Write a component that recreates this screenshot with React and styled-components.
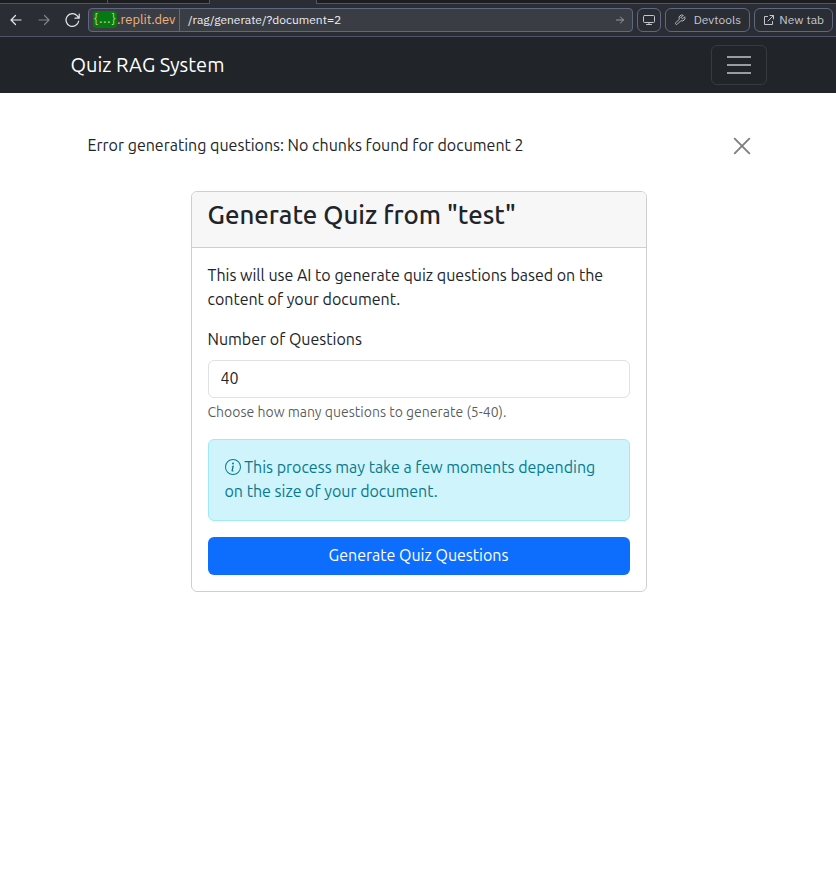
import React from "react";
import styled, { createGlobalStyle } from "styled-components";

const GlobalStyle = createGlobalStyle`
  *, *::before, *::after { box-sizing: border-box; }
  body {
    margin: 0;
    background: #fff;
    color: #212529;
    font: 400 16px/24px "Ubuntu", "Open Sans", sans-serif;
  }
  button, input { font: inherit; margin: 0; }
`;

const Page = styled.div`
  height: 870px;
  overflow: hidden;
`;

/* Browser chrome */
const TabStrip = styled.div`
  display: flex;
  height: 4px;
  background: #1b1d21;
`;
const TabEdge = styled.div`
  width: ${(p) => p.$width}px;
  border-right: ${(p) => (p.$last ? 0 : 1)}px solid #4e5569;
  border-bottom: ${(p) => (p.$active ? 0 : 1)}px solid #4e5569;
  background: ${(p) => (p.$active ? "#2b2d35" : "#1b1d21")};
  flex: ${(p) => (p.$last ? "1" : "none")};
`;
const Toolbar = styled.div`
  display: flex;
  align-items: center;
  height: 33px;
  padding: 0 3px 1px 2px;
  background: #2b2d35;
  border-bottom: 1px solid #4e5569;
  color: #c9ccd3;
  font: 400 12px/22px "IBM Plex Sans", "Inter", sans-serif;
`;
const NavIcon = styled.button`
  display: flex;
  align-items: center;
  justify-content: center;
  width: 28px;
  height: 24px;
  padding: 0;
  border: 0;
  background: none;
  color: ${(p) => (p.$muted ? "#81838a" : "#e6e7ea")};
`;
const AddressBar = styled.div`
  display: flex;
  width: 545px;
  height: 24px;
  margin: 0 4px 0 2px;
  border: 1px solid #5f6880;
  border-radius: 4px;
  background: #3b3d45;
`;
const Host = styled.div`
  display: flex;
  align-items: center;
  width: 91px;
  padding-left: 4px;
  border-right: 1px solid #5f6880;
  color: #f0b27a;
  font-size: 13px;
  line-height: 21px;
`;
const HostName = styled.span`
  height: 22px;
`;
const HostBadge = styled.span`
  width: 24px;
  height: 17px;
  border-radius: 4px;
  background: #067a12;
  color: #c9cf6b;
  letter-spacing: 0.5px;
  line-height: 16px;
  text-align: center;
`;
const Path = styled.div`
  flex: 1;
  padding-left: 8px;
  color: #eceef1;
`;
const GoIcon = styled.div`
  display: flex;
  align-items: center;
  padding-right: 7px;
  color: #9a9ca3;
`;
const ToolButton = styled.button`
  display: flex;
  align-items: center;
  justify-content: space-between;
  width: ${(p) => p.$width}px;
  height: 24px;
  margin-right: ${(p) => (p.$last ? 0 : 4)}px;
  padding: 0 ${(p) => (p.$wide ? 8 : 5)}px;
  border: 1px solid #5f6880;
  border-radius: 6px;
  background: none;
  color: #c3c6ce;
`;

/* Site header */
const Navbar = styled.nav`
  display: flex;
  align-items: center;
  justify-content: space-between;
  height: 56px;
  padding: 0 69px 0 70.5px;
  background: #212529;
`;
const Brand = styled.div`
  color: #fff;
  font-size: 20px;
  line-height: 30px;
`;
const Toggler = styled.button`
  display: flex;
  align-items: center;
  justify-content: center;
  width: 56px;
  height: 40px;
  padding: 0;
  border: 1px solid #373b3e;
  border-radius: 6px;
  background: none;
  color: rgba(255, 255, 255, 0.55);
`;

/* Page content */
const Message = styled.div`
  display: flex;
  align-items: center;
  justify-content: space-between;
  width: 695.5px;
  height: 58px;
  margin: 23px 0 17px 71.5px;
  padding: 0 16px;
`;
const CloseButton = styled.button`
  display: flex;
  padding: 0;
  margin-top: 2px;
  border: 0;
  background: none;
  color: #7f7f7f;
`;
const Card = styled.section`
  width: 456px;
  height: 401px;
  margin-left: 190.5px;
  border: 1px solid #cfcfd0;
  border-radius: 6px;
  overflow: hidden;
`;
const CardHeader = styled.header`
  height: 56px;
  padding: 7px 16px 8px;
  border-bottom: 1px solid #cfcfd0;
  background: #f7f7f7;
`;
const Title = styled.h3`
  margin: 0;
  font-size: 25.8px;
  font-weight: 500;
  line-height: 31px;
`;
const CardBody = styled.div`
  display: flex;
  flex-direction: column;
  padding: 15px 16px 16px;
`;
const Intro = styled.p`
  margin: 0 0 17px;
`;
const Label = styled.label`
  height: 24px;
  margin-bottom: 8px;
  line-height: 22px;
`;
const NumberInput = styled.input`
  width: 100%;
  height: 38px;
  padding: 0 12px 2px;
  border: 1px solid #dee2e6;
  border-radius: 6px;
  outline: 0;
  background: #fff;
  color: #212529;
`;
const Help = styled.div`
  height: 21px;
  margin: 4px 0 16px;
  color: rgba(33, 37, 41, 0.75);
  font-size: 14px;
  line-height: 20px;
`;
const Notice = styled.div`
  height: 82px;
  margin-bottom: 16px;
  padding: 15px 16px;
  border: 1px solid #9eeaf9;
  border-radius: 6px;
  background: #cff4fc;
  color: #087990;
`;
const InfoIcon = styled.svg`
  width: 16px;
  height: 16px;
  vertical-align: -2px;
`;
const Submit = styled.button`
  height: 38px;
  padding: 0 0 2px;
  border: 0;
  border-radius: 6px;
  background: #0d6efd;
  color: #fff;
`;

const Stroke = ({ size = 16, box = 16, width = 1.2, children }) => (
  <svg width={size} height={size} viewBox={`0 0 ${box} ${box}`} fill="none" stroke="currentColor" strokeWidth={width} strokeLinecap="round" strokeLinejoin="round">
    {children}
  </svg>
);

export default function App() {
  return (
    <Page>
      <GlobalStyle />
      <TabStrip>
        <TabEdge $width={108} />
        <TabEdge $width={102} />
        <TabEdge $width={107} $active />
        <TabEdge $last />
      </TabStrip>
      <Toolbar>
        <NavIcon aria-label="Back">
          <Stroke><path d="M13 8H3.5M7.5 3.5 3 8l4.500 4.500" /></Stroke>
        </NavIcon>
        <NavIcon aria-label="Forward" $muted>
          <Stroke><path d="M3 8h9.500M8.500 3.500 13 8l-4.500 4.500" /></Stroke>
        </NavIcon>
        <NavIcon aria-label="Reload">
          <Stroke><path d="M14.700 9A6.400 6.400 0 1 1 13.200 3.800L15 5.800M15.200 2v4.200h-4.200" /></Stroke>
        </NavIcon>
        <AddressBar>
          <Host><HostBadge>{"{...}"}</HostBadge><HostName>.replit.dev</HostName></Host>
          <Path>/rag/generate/?document=2</Path>
          <GoIcon><Stroke size={10} box={10} width={1}><path d="M1.500 5h7M5.500 2l3 3-3 3" /></Stroke></GoIcon>
        </AddressBar>
        <ToolButton $width={24} aria-label="Responsive view">
          <Stroke size={12} box={12} width={1}><path d="M1.500 1.500h9a1 1 0 0 1 1 1v5a1 1 0 0 1-1 1h-9a1 1 0 0 1-1-1v-5a1 1 0 0 1 1-1ZM6 8.500v2M3.500 10.500h5" /></Stroke>
        </ToolButton>
        <ToolButton $width={85} $wide>
          <Stroke size={12} box={24} width={1.8}><path d="M14.700 6.300a1 1 0 0 0 0 1.400l1.600 1.600a1 1 0 0 0 1.400 0l3.770-3.770a6 6 0 0 1-7.940 7.940l-6.910 6.910a2.120 2.120 0 0 1-3-3l6.910-6.910a6 6 0 0 1 7.940-7.940l-3.760 3.760z" /></Stroke>
          Devtools
        </ToolButton>
        <ToolButton $width={79} $wide $last>
          <Stroke size={12} box={12} width={1}><path d="M4.500 2.500H1.500v8h8v-3M7 1.500h3.500V5M10.500 1.500 5 7" /></Stroke>
          New tab
        </ToolButton>
      </Toolbar>

      <Navbar>
        <Brand>Quiz RAG System</Brand>
        <Toggler aria-label="Menu">
          <svg width="30" height="30" viewBox="0 0 30 30" stroke="currentColor" strokeWidth="2" strokeLinecap="butt">
            <path d="M3 7h24M3 15h24M3 23h24" />
          </svg>
        </Toggler>
      </Navbar>

      <Message>
        <span>Error generating questions: No chunks found for document 2</span>
        <CloseButton aria-label="Close">
          <Stroke width={1.9} size={18} box={18}><path d="m1.700 1.700 14.600 14.600M16.300 1.700 1.700 16.300" /></Stroke>
        </CloseButton>
      </Message>

      <Card>
        <CardHeader><Title>Generate Quiz from "test"</Title></CardHeader>
        <CardBody>
          <Intro>This will use AI to generate quiz questions based on the content of your document.</Intro>
          <Label htmlFor="count">Number of Questions</Label>
          <NumberInput id="count" defaultValue="40" />
          <Help>Choose how many questions to generate (5-40).</Help>
          <Notice>
            <InfoIcon viewBox="0 0 16 16" fill="currentColor">
              <path d="M8 15A7 7 0 1 1 8 1a7 7 0 0 1 0 14m0 1A8 8 0 1 0 8 0a8 8 0 0 0 0 16" />
              <path d="m8.930 6.588-2.290.287-.082.380.450.083c.294.070.352.176.288.469l-.738 3.468c-.194.897.105 1.319.808 1.319.545 0 1.178-.252 1.465-.598l.088-.416c-.2.176-.492.246-.686.246-.275 0-.375-.193-.304-.533zM9 4.500a1 1 0 1 1-2 0 1 1 0 0 1 2 0" />
            </InfoIcon>{" "}
            This process may take a few moments depending on the size of your document.
          </Notice>
          <Submit>Generate Quiz Questions</Submit>
        </CardBody>
      </Card>
    </Page>
  );
}
